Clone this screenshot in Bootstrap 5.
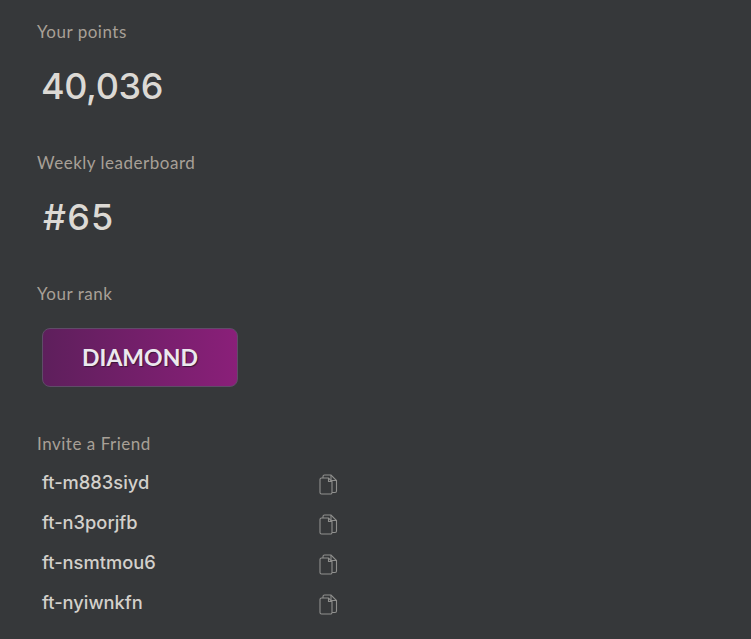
<!DOCTYPE html>
<html lang="en">
<head>
  <meta charset="UTF-8">
  <title>Your points</title>
  <link href="https://cdn.jsdelivr.net/npm/bootstrap@5.3.3/dist/css/bootstrap.min.css" rel="stylesheet">
  <style>
    html, body { height: 100%; }
    body { background: #36383a; font-family: "Open Sans", "Liberation Sans", sans-serif; overflow: hidden; }
    .stats-page { padding: 20px 0 0 37px; }
    .stat-label { color: #a8a097; font-family: Lato, sans-serif; font-size: 17px; line-height: 24px; letter-spacing: .52px; }
    .stat-value { color: #dcd9d4; font-family: Inter, sans-serif; font-weight: 500; font-size: 36px; line-height: 45px; letter-spacing: -.4px; padding-left: 4px; margin-top: 20px; }
    .stat-value-rank { padding-left: 6px; letter-spacing: 1.2px; }
    .stat-block { height: 131px; }
    .rank-block { height: 150px; }
    .rank-box { width: 196px; height: 59px; margin: 22px 0 0 5px; border: 1px solid #5f4c68; border-radius: 8px; background: linear-gradient(90deg, #5e1f5c, #8a1f79); color: #ece8ee; font-family: Lato, sans-serif; font-weight: 700; font-size: 23px; text-shadow: 1px 1px 1px #3a1639; }
    .invite-row { height: 40px; width: 296px; margin-left: 5px; color: #d3d0cb; font-family: Inter, sans-serif; font-weight: 500; font-size: 18.3px; }
    .invite-label { margin-bottom: 7px; }
    .copy-icon { width: 20px; height: 22px; margin-top: 3px; }
  </style>
</head>
<body>

<div class="stats-page">
  <div class="stat-block">
    <div class="stat-label">Your points</div>
    <div class="stat-value">40,036</div>
  </div>
  <div class="stat-block">
    <div class="stat-label">Weekly leaderboard</div>
    <div class="stat-value stat-value-rank">#65</div>
  </div>
  <div class="rank-block">
    <div class="stat-label">Your rank</div>
    <div class="rank-box d-flex align-items-center justify-content-center">DIAMOND</div>
  </div>
  <div class="stat-label invite-label">Invite a Friend</div>

  <div class="invite-row d-flex justify-content-between align-items-center">
    <span>ft-m883siyd</span>
    <svg class="copy-icon" viewBox="0 0 20 22" fill="none" stroke="#8f8f8d" stroke-width="1.1"><path d="M3.500 4h7l3.500 3.500V18.500a1.500 1.500 0 0 1-1.500 1.500H3.500a1.500 1.500 0 0 1-1.500-1.500V5.500A1.500 1.500 0 0 1 3.500 4z"/><path d="M5 4V2.500A1.500 1.500 0 0 1 6.500 1h6.500l5.500 5.500v10.500a1.500 1.500 0 0 1-1.500 1.500h-3"/><path d="M10.500 4v3.500h3.500M13 1v5.500h5.500"/></svg>
  </div>
  <div class="invite-row d-flex justify-content-between align-items-center">
    <span>ft-n3porjfb</span>
    <svg class="copy-icon" viewBox="0 0 20 22" fill="none" stroke="#8f8f8d" stroke-width="1.1"><path d="M3.500 4h7l3.500 3.500V18.500a1.500 1.500 0 0 1-1.500 1.500H3.500a1.500 1.500 0 0 1-1.500-1.500V5.500A1.500 1.500 0 0 1 3.500 4z"/><path d="M5 4V2.500A1.500 1.500 0 0 1 6.500 1h6.500l5.500 5.500v10.500a1.500 1.500 0 0 1-1.500 1.500h-3"/><path d="M10.500 4v3.500h3.500M13 1v5.500h5.500"/></svg>
  </div>
  <div class="invite-row d-flex justify-content-between align-items-center">
    <span>ft-nsmtmou6</span>
    <svg class="copy-icon" viewBox="0 0 20 22" fill="none" stroke="#8f8f8d" stroke-width="1.1"><path d="M3.500 4h7l3.500 3.500V18.500a1.500 1.500 0 0 1-1.500 1.500H3.500a1.500 1.500 0 0 1-1.500-1.500V5.500A1.500 1.500 0 0 1 3.500 4z"/><path d="M5 4V2.500A1.500 1.500 0 0 1 6.500 1h6.500l5.500 5.500v10.500a1.500 1.500 0 0 1-1.500 1.500h-3"/><path d="M10.500 4v3.500h3.500M13 1v5.500h5.500"/></svg>
  </div>
  <div class="invite-row d-flex justify-content-between align-items-center">
    <span>ft-nyiwnkfn</span>
    <svg class="copy-icon" viewBox="0 0 20 22" fill="none" stroke="#8f8f8d" stroke-width="1.1"><path d="M3.500 4h7l3.500 3.500V18.500a1.500 1.500 0 0 1-1.500 1.500H3.500a1.500 1.500 0 0 1-1.500-1.500V5.500A1.500 1.500 0 0 1 3.500 4z"/><path d="M5 4V2.500A1.500 1.500 0 0 1 6.500 1h6.500l5.500 5.500v10.500a1.500 1.500 0 0 1-1.500 1.500h-3"/><path d="M10.500 4v3.500h3.500M13 1v5.500h5.500"/></svg>
  </div>
</div>

<script src="https://cdn.jsdelivr.net/npm/bootstrap@5.3.3/dist/js/bootstrap.bundle.min.js"></script>
</body>
</html>
